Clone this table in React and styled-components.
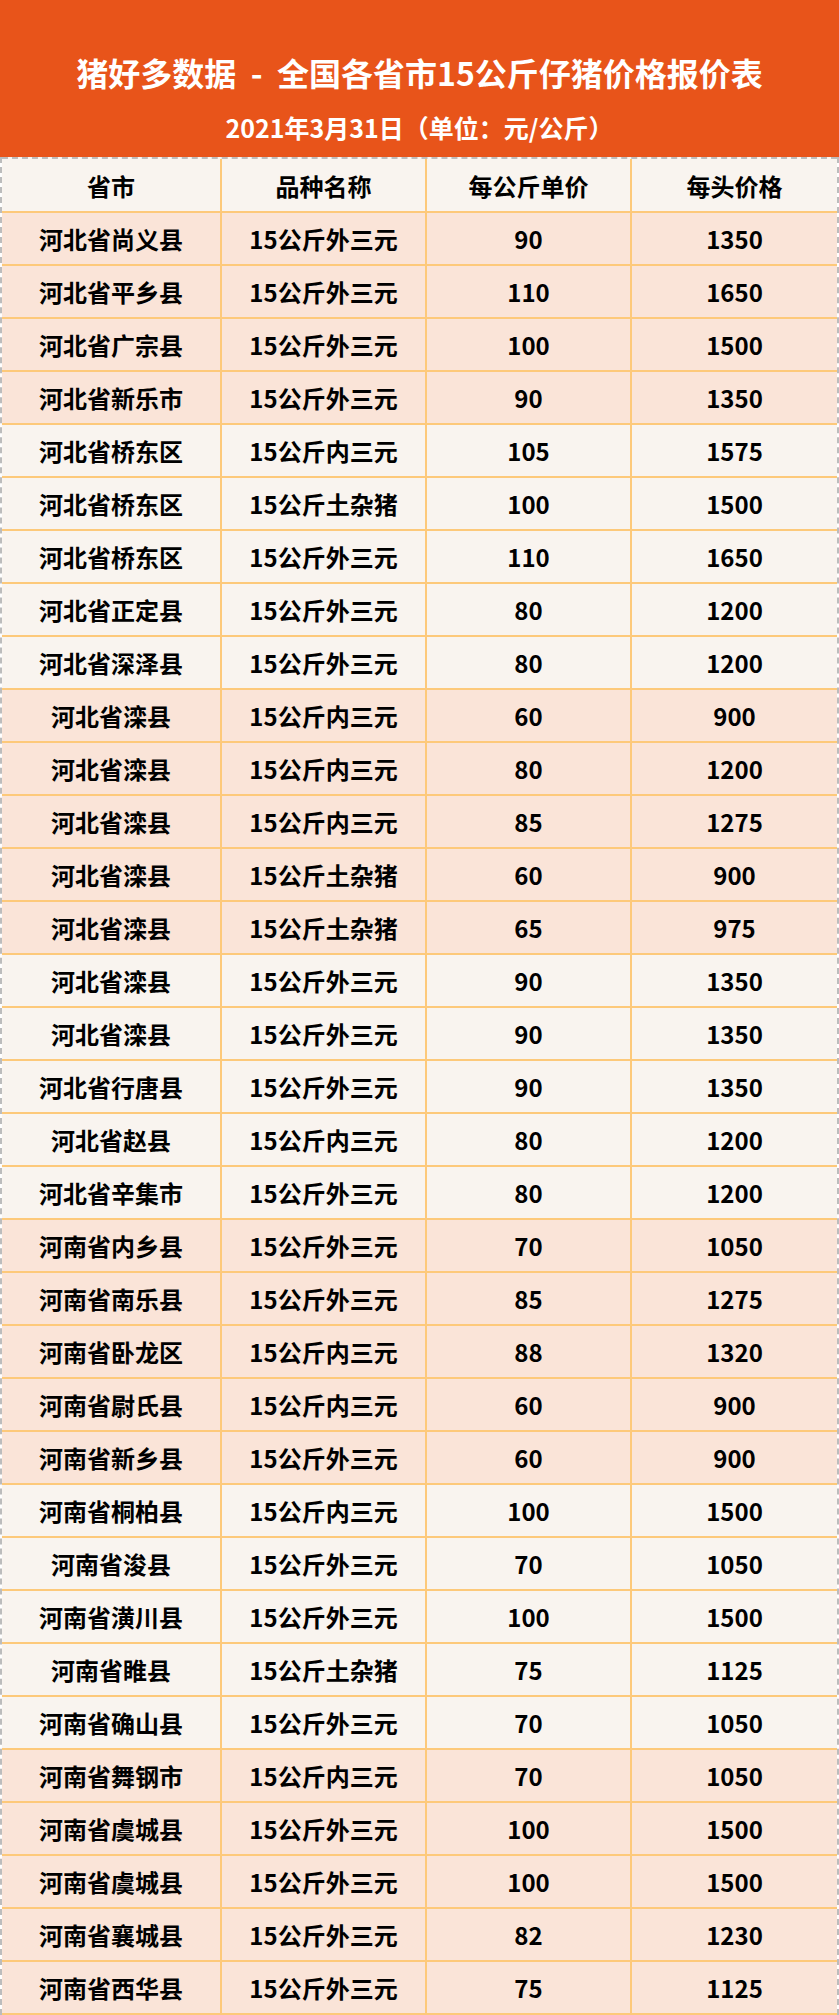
import styled, { createGlobalStyle } from 'styled-components';

const GlobalStyle = createGlobalStyle`
  html, body {
    margin: 0;
    padding: 0;
    background: #ffffff;
  }
  body {
    font-family: "Noto Sans CJK SC", "Noto Sans", sans-serif;
  }
`;

const Page = styled.div`
  width: 839px;
`;

const Banner = styled.div`
  height: 157px;
  background: #e8541a;
  color: #ffffff;
  display: flex;
  flex-direction: column;
  align-items: center;
  justify-content: flex-start;
  font-weight: 700;
`;

const Title = styled.div`
  margin-top: 50px;
  font-size: 32px;
  line-height: 44px;
  white-space: pre;
`;

const SubTitle = styled.div`
  margin-top: 16px;
  font-size: 25px;
  line-height: 34px;
`;

const Table = styled.div`
  border-left: 2px dashed #bcbcbc;
  border-right: 2px dashed #bcbcbc;
`;

const Row = styled.div`
  display: grid;
  grid-template-columns: 220px 205px 205px 205px;
  height: ${(p) => (p.$head ? '52px' : '51px')};
  background: ${(p) => (p.$pink ? '#fae4d8' : '#f9f4ef')};
  border-bottom: 2px solid #fdc97a;
  border-top: ${(p) => (p.$head ? '2px dashed #bcbcbc' : 'none')};
`;

const Cell = styled.div`
  display: flex;
  align-items: center;
  justify-content: center;
  font-size: 24px;
  font-weight: 700;
  color: #000000;
  border-right: ${(p) => (p.$last ? 'none' : '2px solid #fdc97a')};
`;

const rows = [
  ['河北省尚义县', '15公斤外三元', '90', '1350'],
  ['河北省平乡县', '15公斤外三元', '110', '1650'],
  ['河北省广宗县', '15公斤外三元', '100', '1500'],
  ['河北省新乐市', '15公斤外三元', '90', '1350'],
  ['河北省桥东区', '15公斤内三元', '105', '1575'],
  ['河北省桥东区', '15公斤土杂猪', '100', '1500'],
  ['河北省桥东区', '15公斤外三元', '110', '1650'],
  ['河北省正定县', '15公斤外三元', '80', '1200'],
  ['河北省深泽县', '15公斤外三元', '80', '1200'],
  ['河北省滦县', '15公斤内三元', '60', '900'],
  ['河北省滦县', '15公斤内三元', '80', '1200'],
  ['河北省滦县', '15公斤内三元', '85', '1275'],
  ['河北省滦县', '15公斤土杂猪', '60', '900'],
  ['河北省滦县', '15公斤土杂猪', '65', '975'],
  ['河北省滦县', '15公斤外三元', '90', '1350'],
  ['河北省滦县', '15公斤外三元', '90', '1350'],
  ['河北省行唐县', '15公斤外三元', '90', '1350'],
  ['河北省赵县', '15公斤内三元', '80', '1200'],
  ['河北省辛集市', '15公斤外三元', '80', '1200'],
  ['河南省内乡县', '15公斤外三元', '70', '1050'],
  ['河南省南乐县', '15公斤外三元', '85', '1275'],
  ['河南省卧龙区', '15公斤内三元', '88', '1320'],
  ['河南省尉氏县', '15公斤内三元', '60', '900'],
  ['河南省新乡县', '15公斤外三元', '60', '900'],
  ['河南省桐柏县', '15公斤内三元', '100', '1500'],
  ['河南省浚县', '15公斤外三元', '70', '1050'],
  ['河南省潢川县', '15公斤外三元', '100', '1500'],
  ['河南省睢县', '15公斤土杂猪', '75', '1125'],
  ['河南省确山县', '15公斤外三元', '70', '1050'],
  ['河南省舞钢市', '15公斤内三元', '70', '1050'],
  ['河南省虞城县', '15公斤外三元', '100', '1500'],
  ['河南省虞城县', '15公斤外三元', '100', '1500'],
  ['河南省襄城县', '15公斤外三元', '82', '1230'],
  ['河南省西华县', '15公斤外三元', '75', '1125'],
];

// rows come in bands: first 4 pink, then alternating blocks of 5
const isPink = (i) => (i < 4 ? true : Math.floor((i - 4) / 5) % 2 === 1);

const App = () => {
  return (
    <Page>
      <GlobalStyle />
      <Banner>
        <Title>猪好多数据  -  全国各省市15公斤仔猪价格报价表</Title>
        <SubTitle>2021年3月31日（单位：元/公斤）</SubTitle>
      </Banner>
      <Table>
        <Row $head>
          <Cell>省市</Cell>
          <Cell>品种名称</Cell>
          <Cell>每公斤单价</Cell>
          <Cell $last>每头价格</Cell>
        </Row>
        {rows.map((r, i) => (
          <Row key={i} $pink={isPink(i)}>
            <Cell>{r[0]}</Cell>
            <Cell>{r[1]}</Cell>
            <Cell>{r[2]}</Cell>
            <Cell $last>{r[3]}</Cell>
          </Row>
        ))}
      </Table>
    </Page>
  );
};

export default App;
